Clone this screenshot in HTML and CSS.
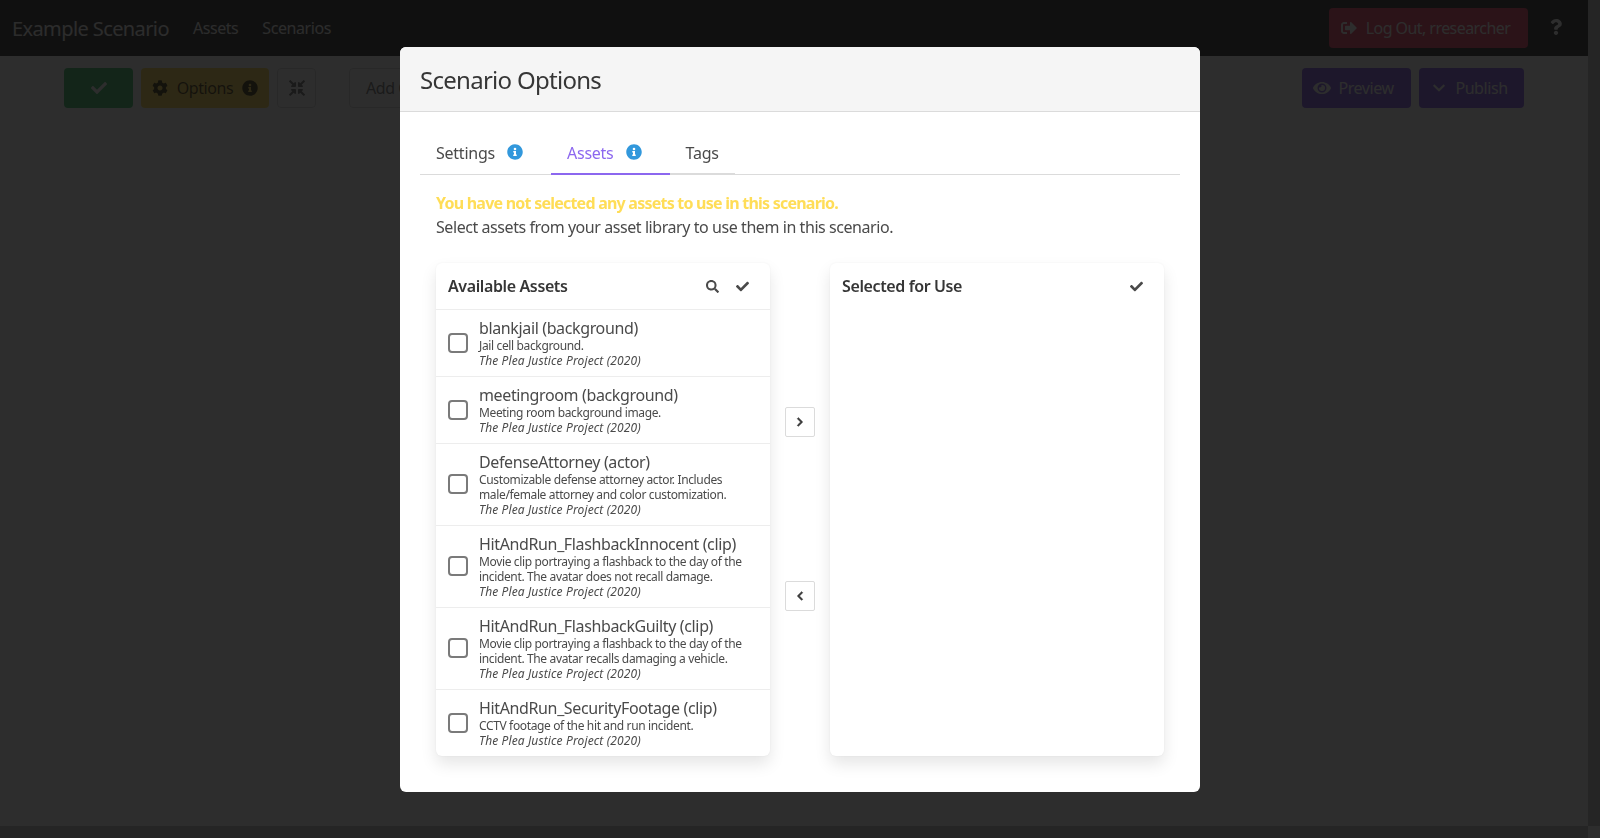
FILE: index.html
```html
<!DOCTYPE html>
<html lang="en">
<head>
<meta charset="utf-8">
<title>Scenario Options</title>
<link rel="stylesheet" href="styles.css">
</head>
<body>
<div class="page">
  <main class="main">
    <nav class="navbar">
      <span class="brand">Example Scenario</span>
      <a class="navlink">Assets</a>
      <a class="navlink">Scenarios</a>
      <span class="spacer"></span>
      <a class="btn logout">
        <svg class="ic" viewBox="0 0 512 512"><path d="M497 273L329 441c-15 15-41 4.500-41-17v-96H152c-13.300 0-24-10.700-24-24v-96c0-13.300 10.700-24 24-24h136V88c0-21.400 25.900-32 41-17l168 168c9.300 9.400 9.300 24.600 0 34zM192 436v-40c0-6.600-5.400-12-12-12H96c-17.700 0-32-14.300-32-32V160c0-17.700 14.300-32 32-32h84c6.600 0 12-5.400 12-12V76c0-6.600-5.400-12-12-12H96c-53 0-96 43-96 96v192c0 53 43 96 96 96h84c6.600 0 12-5.400 12-12z"/></svg>
        <span>Log Out, rresearcher</span></a>
      <svg class="help" viewBox="0 0 384 512"><path d="M202.021 0C122.202 0 70.503 32.703 29.914 91.026c-7.363 10.58-5.093 25.086 5.178 32.874l43.138 32.709c10.373 7.865 25.132 6.026 33.253-4.148 25.049-31.381 43.63-49.449 82.757-49.449 30.764 0 68.816 19.799 68.816 49.631 0 22.552-18.617 34.134-48.993 51.164-35.423 19.86-82.299 44.576-82.299 106.405V320c0 13.255 10.745 24 24 24h72.471c13.255 0 24-10.745 24-24v-5.773c0-42.86 125.268-44.645 125.268-160.627C377.504 66.256 286.902 0 202.021 0zM192 373.459c-38.196 0-69.271 31.075-69.271 69.271 0 38.195 31.075 69.27 69.271 69.27s69.271-31.075 69.271-69.271-31.075-69.27-69.271-69.27z"/></svg>
    </nav>
    <div class="toolbar">
      <a class="btn success"><svg class="ic" viewBox="0 0 512 512"><path d="M174 439L7 273c-10-10-10-26 0-36l36-36c10-10 26-10 36 0l113 112L433 73c10-10 26-10 36 0l36 36c10 10 10 26 0 36L210 439c-10 10-26 10-36 0z"/></svg></a>
      <a class="btn warning">
        <svg class="ic" viewBox="0 0 512 512"><path d="M487 316l-42-25c4-23 4-47 0-70l42-25c5-3 7-8 5-14-11-35-30-67-54-93-4-4-9-5-14-2l-42 25c-18-15-39-27-61-35V28c0-6-4-10-9-11-37-8-74-8-110 0-5 1-9 5-9 11v49c-22 8-43 20-61 35L90 88c-5-3-10-2-14 2-24 26-43 58-54 93-2 6 0 11 5 14l42 25c-4 23-4 47 0 70l-42 25c-5 3-7 8-5 14 11 35 30 67 54 93 4 4 9 5 14 2l42-25c18 15 39 27 61 35v49c0 6 4 10 9 11 37 8 74 8 110 0 5-1 9-5 9-11v-49c22-8 43-20 61-35l42 25c5 3 10 2 14-2 24-26 43-58 54-93 2-6 0-11-5-14zM256 336c-44 0-80-36-80-80s36-80 80-80 80 36 80 80-36 80-80 80z"/></svg>
        <span>Options</span>
        <svg class="ic" viewBox="0 0 512 512"><path d="M256 8C119 8 8 119 8 256s111 248 248 248 248-111 248-248S393 8 256 8zm0 110a42 42 0 1 1 0 84 42 42 0 0 1 0-84zm56 254c0 7-5 12-12 12h-88c-7 0-12-5-12-12v-24c0-7 5-12 12-12h12v-64h-12c-7 0-12-5-12-12v-24c0-7 5-12 12-12h64c7 0 12 5 12 12v100h12c7 0 12 5 12 12v24z"/></svg>
      </a>
      <a class="btn plain compress"><svg class="ic" viewBox="0 0 512 512"><path d="M200 288H88c-21.400 0-32.100 25.800-17 41l32.900 31-99.200 99.300c-6.200 6.200-6.200 16.400 0 22.600l25.400 25.400c6.200 6.200 16.400 6.200 22.600 0L152 408l31 33c15.100 15.100 41 4.400 41-17V312c0-13.300-10.700-24-24-24zm112-64h112c21.400 0 32.100-25.900 17-41l-33-31 99.300-99.300c6.200-6.200 6.200-16.400 0-22.600L481.900 4.700c-6.200-6.200-16.400-6.200-22.600 0L360 104l-31-33C313.900 55.900 288 66.600 288 88v112c0 13.300 10.700 24 24 24zm96 136l33-31c15.100-15.100 4.400-41-17-41H312c-13.300 0-24 10.700-24 24v112c0 21.400 25.900 32.100 41 17l31-33 99.300 99.300c6.200 6.200 16.400 6.200 22.600 0l25.400-25.400c6.200-6.200 6.200-16.400 0-22.600L408 360zM183 71l-31 33L52.700 4.700c-6.200-6.200-16.400-6.200-22.600 0L4.700 30.100c-6.200 6.200-6.200 16.400 0 22.600L104 152l-33 31c-15.100 15.100-4.400 41 17 41h112c13.300 0 24-10.700 24-24V88c0-21.400-25.900-32.100-41-17z"/></svg></a>
      <a class="btn plain addbtn"><span class="addtext">Add Content</span></a>
      <span class="spacer"></span>
      <a class="btn link preview">
        <svg class="ic eye" viewBox="0 0 576 512"><path d="M572 241C518 136 410 64 288 64S58 136 4 241a32 32 0 0 0 0 30c54 105 162 177 284 177s230-72 284-177a32 32 0 0 0 0-30zM288 400a144 144 0 1 1 0-288 144 144 0 0 1 0 288zm0-240a95 95 0 0 0-25 4 48 48 0 0 1-67 67 96 96 0 1 0 92-71z"/></svg>
        <span>Preview</span></a>
      <a class="btn link publish">
        <svg class="ic chev" viewBox="0 0 448 512"><path d="M207 381L13 187c-9-9-9-24 0-34l23-23c9-9 24-9 34 0l154 154 154-154c9-9 25-9 34 0l23 23c9 9 9 25 0 34L241 381c-9 9-25 9-34 0z"/></svg>
        <span>Publish</span></a>
    </div>
  </main>
  <div class="track"></div>
  <div class="track"></div>
  <div class="corner"></div>
</div>
<div class="overlay">
  <div class="modal">
    <header class="modal-head">Scenario Options</header>
    <section class="modal-body">
      <div class="tabs">
        <a class="tab with-info"><span>Settings</span><svg class="ic info" viewBox="0 0 512 512"><path d="M256 8C119 8 8 119 8 256s111 248 248 248 248-111 248-248S393 8 256 8zm0 110a42 42 0 1 1 0 84 42 42 0 0 1 0-84zm56 254c0 7-5 12-12 12h-88c-7 0-12-5-12-12v-24c0-7 5-12 12-12h12v-64h-12c-7 0-12-5-12-12v-24c0-7 5-12 12-12h64c7 0 12 5 12 12v100h12c7 0 12 5 12 12v24z"/></svg></a>
        <a class="tab with-info active"><span>Assets</span><svg class="ic info" viewBox="0 0 512 512"><path d="M256 8C119 8 8 119 8 256s111 248 248 248 248-111 248-248S393 8 256 8zm0 110a42 42 0 1 1 0 84 42 42 0 0 1 0-84zm56 254c0 7-5 12-12 12h-88c-7 0-12-5-12-12v-24c0-7 5-12 12-12h12v-64h-12c-7 0-12-5-12-12v-24c0-7 5-12 12-12h64c7 0 12 5 12 12v100h12c7 0 12 5 12 12v24z"/></svg></a>
        <a class="tab last"><span>Tags</span></a>
      </div>
      <div class="message">
        <p class="warn">You have not selected any assets to use in this scenario.</p>
        <p>Select assets from your asset library to use them in this scenario.</p>
      </div>
      <div class="transfer">
        <div class="panel">
          <div class="panel-head">
            <span class="panel-title">Available Assets</span>
            <svg class="ic tool" viewBox="0 0 512 512"><path d="M505 443L405 343c-5-5-11-7-17-7h-16c28-35 44-80 44-128C416 93 323 0 208 0S0 93 0 208s93 208 208 208c48 0 93-16 128-44v16c0 6 2 12 7 17l100 100c9 9 25 9 34 0l28-28c9-10 9-25 0-34zM208 336a128 128 0 1 1 0-256 128 128 0 0 1 0 256z"/></svg>
            <svg class="ic tool" viewBox="0 0 512 512"><path d="M174 439L7 273c-10-10-10-26 0-36l36-36c10-10 26-10 36 0l113 112L433 73c10-10 26-10 36 0l36 36c10 10 10 26 0 36L210 439c-10 10-26 10-36 0z"/></svg>
          </div>
          <div class="row">
            <span class="check"></span>
            <div class="row-text">
              <div class="name">blankjail (background)</div>
              <div class="desc">Jail cell background.</div>
              <div class="credit">The Plea Justice Project (2020)</div>
            </div>
          </div>
          <div class="row">
            <span class="check"></span>
            <div class="row-text">
              <div class="name">meetingroom (background)</div>
              <div class="desc">Meeting room background image.</div>
              <div class="credit">The Plea Justice Project (2020)</div>
            </div>
          </div>
          <div class="row">
            <span class="check"></span>
            <div class="row-text">
              <div class="name">DefenseAttorney (actor)</div>
              <div class="desc">Customizable defense attorney actor. Includes<br>male/female attorney and color customization.</div>
              <div class="credit">The Plea Justice Project (2020)</div>
            </div>
          </div>
          <div class="row">
            <span class="check"></span>
            <div class="row-text">
              <div class="name">HitAndRun_FlashbackInnocent (clip)</div>
              <div class="desc">Movie clip portraying a flashback to the day of the<br>incident. The avatar does not recall damage.</div>
              <div class="credit">The Plea Justice Project (2020)</div>
            </div>
          </div>
          <div class="row">
            <span class="check"></span>
            <div class="row-text">
              <div class="name">HitAndRun_FlashbackGuilty (clip)</div>
              <div class="desc">Movie clip portraying a flashback to the day of the<br>incident. The avatar recalls damaging a vehicle.</div>
              <div class="credit">The Plea Justice Project (2020)</div>
            </div>
          </div>
          <div class="row">
            <span class="check"></span>
            <div class="row-text">
              <div class="name">HitAndRun_SecurityFootage (clip)</div>
              <div class="desc">CCTV footage of the hit and run incident.</div>
              <div class="credit">The Plea Justice Project (2020)</div>
            </div>
          </div>
        </div>
        <div class="movers">
          <a class="mover"><svg class="ic mini" viewBox="0 0 320 512"><path d="M285 273L91 467c-9 9-25 9-34 0l-23-23c-9-9-9-24 0-34l154-154L34 102c-9-10-9-25 0-34l23-23c9-9 25-9 34 0l194 194c9 9 9 25 0 34z"/></svg></a>
          <a class="mover"><svg class="ic mini" viewBox="0 0 320 512"><path d="M35 239L229 45c9-9 25-9 34 0l23 23c9 9 9 24 0 34L132 256l154 154c9 10 9 25 0 34l-23 23c-9 9-25 9-34 0L35 273c-9-9-9-25 0-34z"/></svg></a>
        </div>
        <div class="panel">
          <div class="panel-head">
            <span class="panel-title">Selected for Use</span>
            <svg class="ic tool" viewBox="0 0 512 512"><path d="M174 439L7 273c-10-10-10-26 0-36l36-36c10-10 26-10 36 0l113 112L433 73c10-10 26-10 36 0l36 36c10 10 10 26 0 36L210 439c-10 10-26 10-36 0z"/></svg>
          </div>
        </div>
      </div>
    </section>
  </div>
</div>
</body>
</html>
```

FILE: styles.css
```css
* { box-sizing: border-box; }
html, body { margin: 0; height: 100%; overflow: hidden; }
body { font-family: "Noto Sans", sans-serif; font-size: 16px; letter-spacing: -0.027em; color: #4a4a4a; background: #fff; }
.page { height: 838px; display: grid; grid-template-columns: 1fr 12px; grid-template-rows: 1fr 12px; background: #fff; }
.main { min-width: 0; }
.track { background: #c8c8c8; }
.corner { background: #fff; }
.navbar { height: 56px; background: #363636; display: flex; align-items: center; padding: 0 26px 0 12px; color: #f5f5f5; }
.brand { font-size: 20px; margin-right: 24px; letter-spacing: -0.03em; }
.navlink { margin-right: 24px; }
.spacer { flex: 1; }
.btn { display: inline-flex; align-items: center; justify-content: center; height: 40px; border-radius: 4px; border: 1px solid transparent; flex: none; }
.ic { width: 16px; height: 16px; fill: currentColor; flex: none; }
.logout { background: #f14668; color: #fff; width: 199px; gap: 9px; padding-right: 6px; margin-right: 22px; letter-spacing: -0.035em; }
.help { width: 12px; height: 16px; fill: #fff; margin-bottom: 2px; }
.toolbar { height: 52px; display: flex; align-items: flex-end; padding: 0 64px; gap: 8px; background: #fff; }
.success { background: #48c774; color: #fff; width: 69px; }
.warning { background: #ffdd57; color: rgba(0,0,0,.7); width: 128px; gap: 9px; }
.plain { border-color: #dbdbdb; background: #fff; color: #7a7a7a; }
.compress { width: 39px; }
.addbtn { margin-left: 25px; justify-content: flex-start; padding: 0 16px; }
.addtext { white-space: nowrap; }
.link { background: #8c67ef; color: #fff; gap: 7px; }
.preview { width: 109px; padding-right: 6px; }
.publish { width: 105px; gap: 10px; padding-right: 2px; }
.eye { width: 18px; }
.chev { width: 12px; }
.overlay { position: fixed; inset: 0; background: rgba(10,10,10,.86); display: flex; justify-content: center; align-items: flex-start; padding-top: 47px; }
.modal { width: 800px; height: 745px; background: #fff; border-radius: 6px; overflow: hidden; display: flex; flex-direction: column; }
.modal-head { height: 65px; flex: none; background: #f5f5f5; border-bottom: 1px solid #dbdbdb; padding: 0 20px; display: flex; align-items: center; font-size: 24px; letter-spacing: -0.03em; color: #363636; }
.modal-body { padding: 20px; flex: 1; }
.tabs { display: flex; height: 43px; border-bottom: 1px solid #dbdbdb; letter-spacing: -0.015em; }
.tab { height: 43px; display: flex; align-items: center; padding: 0 16px; border-bottom: 2px solid transparent; }
.with-info { gap: 12px; padding-right: 28px; }
.tab.last { border-bottom-color: #dbdbdb; }
.tab.active { color: #8c67ef; border-bottom-color: #8c67ef; }
.info { color: #3298dc; margin-top: -2px; }
.message { padding: 16px 16px 0; line-height: 24px; }
.message p { margin: 0; }
.message .warn { color: #ffdd57; font-weight: 700; letter-spacing: -0.048em; }
.transfer { display: flex; padding: 24px 16px 0; }
.panel { width: 334px; height: 493px; border-radius: 6px; background: #fff; box-shadow: 0 8px 16px rgba(10,10,10,.1), 0 0 2px rgba(10,10,10,.05); }
.panel-head { height: 47px; display: flex; align-items: center; padding: 0 21px 0 12px; gap: 17px; border-bottom: 1px solid #ededed; }
.panel:last-child .panel-head { border-bottom-color: transparent; }
.panel-title { flex: 1; font-weight: 600; letter-spacing: -0.024em; color: #363636; }
.tool { width: 13px; height: 13px; color: #4a4a4a; }
.row { display: flex; align-items: center; padding: 6px 12px; border-bottom: 1px solid #ededed; gap: 11px; }
.row:last-child { border-bottom: 0; }
.check { width: 20px; height: 20px; margin-bottom: 1px; border: 2px solid #7a7a7a; border-radius: 4px; flex: none; }
.name { font-size: 16px; line-height: 24px; letter-spacing: -0.023em; margin-bottom: -2px; }
.desc, .credit { font-size: 12px; line-height: 15px; }
.desc { letter-spacing: -0.03em; }
.credit { font-style: italic; letter-spacing: 0.01em; padding-bottom: 2px; }
.movers { width: 60px; display: flex; flex-direction: column; align-items: center; justify-content: center; gap: 144px; padding-bottom: 2px; }
.mover { width: 30px; height: 30px; border: 1px solid #dbdbdb; border-radius: 2px; display: flex; align-items: center; justify-content: center; background: #fff; color: #363636; }
.mini { width: 8px; height: 10px; stroke: currentColor; stroke-width: 30; }
```
